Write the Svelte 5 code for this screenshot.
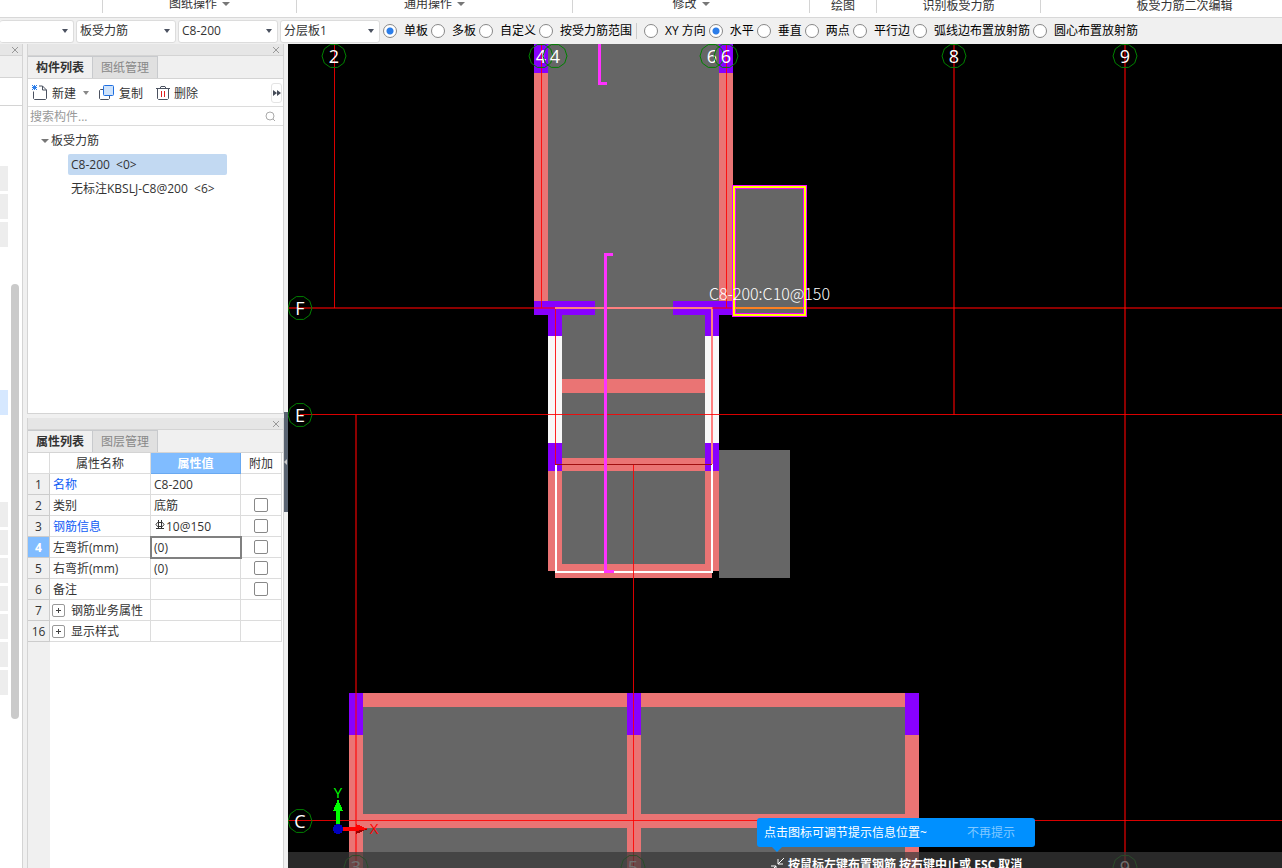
<script>
  const ribbonGroups = [
    { label: '', width: 103 },
    { label: '图纸操作', width: 194, menu: true },
    { label: '通用操作', width: 276, menu: true },
    { label: '修改', width: 237, menu: true },
    { label: '绘图', width: 67 },
    { label: '识别板受力筋', width: 164 },
    { label: '板受力筋二次编辑', width: 288 },
  ];

  const combos = [
    { name: '构件类型', value: '板受力筋' },
    { name: '构件', value: 'C8-200' },
    { name: '分层', value: '分层板1' },
  ];

  const scopes = ['单板', '多板', '自定义', '按受力筋范围'];
  const directions = ['XY 方向', '水平', '垂直', '两点', '平行边', '弧线边布置放射筋', '圆心布置放射筋'];
  let scope = '单板';
  let direction = '水平';

  const navGroups = [
    { gap: 60, count: 3 },
    { gap: 143, count: 1, active: true },
    { gap: 87, count: 7 },
  ];

  let rows = [
    { no: 1, name: '名称', value: 'C8-200', link: true },
    { no: 2, name: '类别', value: '底筋', check: true },
    { no: 3, name: '钢筋信息', value: '10@150', link: true, check: true, rebar: true },
    { no: 4, name: '左弯折(mm)', value: '(0)', check: true, active: true },
    { no: 5, name: '右弯折(mm)', value: '(0)', check: true },
    { no: 6, name: '备注', value: '', check: true },
    { no: 7, name: '钢筋业务属性', value: '', group: true },
    { no: 16, name: '显示样式', value: '', group: true },
  ];

  // plan shapes: x, y, width, height
  const slabs = [
    [534, 44, 199, 264],
    [562, 308, 143, 260],
    [719, 450, 71, 128],
    [733, 187, 72, 128],
    [356, 700, 556, 168],
  ];
  const beams = [
    [534, 73, 14, 228], [719, 73, 14, 228],
    [562, 379, 143, 14], [562, 458, 143, 13],
    [548, 471, 14, 100], [705, 471, 14, 100], [555, 564, 157, 14],
    [363, 693, 542, 14], [363, 814, 542, 14],
    [349, 735, 14, 133], [627, 735, 14, 133], [905, 735, 14, 133],
  ];
  const columns = [
    [534, 44, 14, 29], [719, 44, 14, 29],
    [534, 301, 61, 14], [673, 301, 60, 14],
    [548, 315, 14, 21], [705, 315, 14, 21],
    [548, 443, 14, 28], [705, 443, 14, 28],
    [349, 693, 14, 42], [627, 693, 14, 42], [905, 693, 14, 42],
  ];
  const walls = [[548, 336, 14, 107], [705, 336, 14, 107]];

  // axes: x, y, width, height
  const axes = [
    [334, 44, 1, 264], [541, 44, 1, 264], [726, 44, 1, 264],
    [633, 465, 1, 403], [555, 308, 1, 156],
    [300, 414, 982, 1], [288, 820, 994, 1],
  ];
  const softAxes = [
    [355, 415, 2, 453], [954, 44, 1, 371], [1125, 44, 1, 824],
    [288, 307, 994, 2],
    [953, 44, 1, 371], [1124, 44, 1, 824],
  ];
  const bubbles = [
    [334, 56, '2'], [541, 56, '4'], [555, 56, '4'], [712, 56, '6'], [726, 56, '6'],
    [954, 56, '8'], [1125, 56, '9'],
    [300, 308, 'F'], [300, 415, 'E'], [300, 821, 'C'],
    [356, 867, '3'], [633, 867, '5'], [1125, 867, '9'],
  ];

  const ring = Array.from({ length: 10 }, (_, i) => {
    const a = (i * Math.PI) / 5;
    return `${(Math.cos(a) * 12).toFixed(1)},${(Math.sin(a) * 12).toFixed(1)}`;
  }).join(' ');
</script>

<div class="app">
  <header class="ribbon">
    {#each ribbonGroups as group}
      <div class="ribbon-group" style="width: {group.width}px">
        <span class:raised={group.menu}>{group.label}</span>
        {#if group.menu}<i class="caret wide"></i>{/if}
      </div>
    {/each}
  </header>

  <div class="options">
    <div class="combo first">
      <select aria-label="楼层"><option></option></select>
      <i class="caret"></i>
    </div>
    {#each combos as combo}
      <div class="combo">
        <select aria-label={combo.name}><option>{combo.value}</option></select>
        <i class="caret"></i>
      </div>
    {/each}
    <div class="radios">
      {#each scopes as item}
        <label><input type="radio" name="scope" value={item} bind:group={scope} />{item}</label>
      {/each}
    </div>
    <div class="radios divided">
      {#each directions as item}
        <label><input type="radio" name="direction" value={item} bind:group={direction} />{item}</label>
      {/each}
    </div>
  </div>

  <main>
    <nav class="nav">
      <div class="titlebar">
        <button class="close" aria-label="关闭"><svg viewBox="0 0 8 8"><path d="M1 1l6 6M7 1L1 7" /></svg></button>
      </div>
      <div class="nav-tabs"></div>
      <div class="nav-head"></div>
      <div class="nav-body">
        <div class="nav-list">
          {#each navGroups as group}
            <div class="nav-group" style="margin-top: {group.gap}px">
              {#each Array(group.count) as _}
                <div class="nav-item" class:active={group.active}></div>
              {/each}
            </div>
          {/each}
        </div>
        <div class="scrollbar"></div>
      </div>
    </nav>

    <aside class="dock">
      <section class="panel list-panel">
        <div class="titlebar">
          <button class="close" aria-label="关闭"><svg viewBox="0 0 8 8"><path d="M1 1l6 6M7 1L1 7" /></svg></button>
        </div>
        <div class="tabs">
          <button class="tab active">构件列表</button>
          <button class="tab">图纸管理</button>
        </div>
        <div class="toolbar">
          <button class="tool">
            <svg width="16" height="16" viewBox="0 0 16 16">
              <path d="M1.500 6.500v7l1 1h11l1-1V5l-4-4H7M10.500 1v4h4" fill="none" stroke="#4b5260" />
              <path d="M0 0l5 5M5 0L0 5M2.500 0v5M0 2.500h5" stroke="#2b7de9" />
            </svg>
            <span>新建</span>
          </button>
          <i class="caret menu-caret"></i>
          <button class="tool">
            <svg width="16" height="16" viewBox="0 0 16 16">
              <path d="M4.500 4.500h-3l-1 1v8l1 1h8l1-1V11" fill="none" stroke="#4b5260" />
              <rect x="4.500" y="0.500" width="10" height="10" rx="1" fill="#cfe3fb" stroke="#1f6fe0" />
            </svg>
            <span>复制</span>
          </button>
          <button class="tool delete">
            <svg width="14" height="16" viewBox="0 0 14 16">
              <path d="M0 3.500h14M4 3.500l1-2h4l1 2M1.500 3.500v10l1 1h9l1-1v-10" fill="none" stroke="#4b5260" />
              <path d="M5.500 6v6M8.500 6v6" stroke="#e02020" />
            </svg>
            <span>删除</span>
          </button>
          <button class="more" aria-label="更多"><svg width="8" height="6" viewBox="0 0 8 6"><path d="M0 0l4 3-4 3zM4 0l4 3-4 3z" fill="#444b57" /></svg></button>
        </div>
        <div class="search">
          <input type="text" placeholder="搜索构件..." aria-label="搜索构件" />
          <svg width="11" height="11" viewBox="0 0 11 11"><circle cx="5" cy="5" r="4" /><path d="M8 8l2 2" /></svg>
        </div>
        <div class="tree">
          <div class="tree-root"><i class="caret wide"></i>板受力筋</div>
          <div class="tree-item selected">C8-200&nbsp; &lt;0&gt;</div>
          <div class="tree-item">无标注KBSLJ-C8@200&nbsp; &lt;6&gt;</div>
        </div>
      </section>

      <section class="panel props-panel">
        <div class="titlebar">
          <button class="close" aria-label="关闭"><svg viewBox="0 0 8 8"><path d="M1 1l6 6M7 1L1 7" /></svg></button>
        </div>
        <div class="tabs">
          <button class="tab active">属性列表</button>
          <button class="tab">图层管理</button>
        </div>
        <table>
          <thead>
            <tr><th class="no"></th><th class="name">属性名称</th><th class="value">属性值</th><th class="extra">附加</th></tr>
          </thead>
          <tbody>
            {#each rows as row}
              <tr class:active={row.active}>
                <th class="no" scope="row">{row.no}</th>
                <td class:link={row.link}>
                  {#if row.group}<button class="expand" aria-label="展开{row.name}"></button>{/if}{row.name}
                </td>
                <td class="cell">
                  {#if row.rebar}
                    <svg class="rebar" width="10" height="10" viewBox="0 0 10 10"><path d="M2.500 2.500h5l1.500 2-1.500 2h-5L1 4.500zM3.500 0v9M6.500 0v9M1 8.500h8" /></svg>
                  {/if}{row.value}
                </td>
                <td class="extra">
                  {#if row.check}<input type="checkbox" aria-label="附加{row.name}" />{/if}
                </td>
              </tr>
            {/each}
          </tbody>
        </table>
        <div class="gutter"></div>
      </section>
    </aside>

    <div class="splitter">
      <button class="handle" aria-label="收起"><i></i></button>
    </div>

    <div class="canvas">
      <svg class="plan">
        <g transform="translate(-288 -44)">
          {#each slabs as [x, y, width, height]}<rect class="slab" {x} {y} {width} {height} />{/each}
          {#each beams as [x, y, width, height]}<rect class="beam" {x} {y} {width} {height} />{/each}
          {#each walls as [x, y, width, height]}<rect class="wall" {x} {y} {width} {height} />{/each}
          {#each columns as [x, y, width, height]}<rect class="column" {x} {y} {width} {height} />{/each}

          <path class="outline" d="M556 464v108h156V464" />
          <path class="edge" d="M556 308h156v156" />
          {#each axes as [x, y, width, height]}<rect class="axis" {x} {y} {width} {height} />{/each}
          {#each softAxes as [x, y, width, height]}<rect class="axis soft" {x} {y} {width} {height} />{/each}
          <path class="edge" d="M555 308h157" />
          <path class="dim" d="M555 464.500h157" />

          <path class="rebar-line" d="M599.500 44v39.500h7M613 254.500h-7.500v317h8" />
          <rect class="pick-halo" x="734" y="187" width="71" height="128" />
          <rect class="pick" x="734" y="187" width="71" height="128" />
          <path class="cross" d="M735 308h69" />
          <text class="note" x="709" y="300">C8-200:C10@150</text>

          {#each bubbles as [x, y, label]}
            <g transform="translate({x} {y})">
              <polygon class="ring" points={ring} />
              <text class="axis-label" y="7">{label}</text>
            </g>
          {/each}

          <path d="M338 828v-20" stroke="#0f0" stroke-width="4" />
          <path d="M338 799l5 12h-10z" fill="#0f0" />
          <path d="M338 829h20" stroke="#f00" stroke-width="4" />
          <path d="M368 829l-12 5v-10z" fill="#f00" />
          <path d="M368 829l-12 5v-3z" fill="#900" />
          <circle cx="338" cy="829" r="5" fill="#0000c0" />
          <text class="ucs" x="338" y="798" fill="#0f0">Y</text>
          <text class="ucs" x="374" y="834" fill="#f00">X</text>
        </g>
      </svg>

      <div class="status">
        <svg width="16" height="16" viewBox="0 0 16 16"><path d="M15 1L9 7M9 2v5h5M1 15l6-6M2 9h5v5" /></svg>
        <span>按鼠标左键布置钢筋 按右键中止或 ESC 取消</span>
      </div>
      <div class="tip">
        <span>点击图标可调节提示信息位置~</span>
        <button>不再提示</button>
      </div>
    </div>
  </main>
</div>

<style>
  :global(body) {
    margin: 0;
  }
  .app {
    display: flex;
    flex-direction: column;
    height: 100vh;
    overflow: hidden;
    background: #f0f0f0;
    color: #333;
    font: 12px/16px 'Open Sans', 'Noto Sans CJK SC', sans-serif;
  }
  .app * {
    box-sizing: border-box;
  }
  button,
  input,
  select {
    margin: 0;
    padding: 0;
    border: 0;
    background: none;
    color: inherit;
    font: inherit;
  }
  .caret {
    flex: none;
    border: 3px solid transparent;
    border-top: 4px solid #4b5260;
    border-bottom: 0;
  }
  .caret.wide {
    border-width: 4px 4px 0;
    border-top-color: #777;
  }

  .ribbon {
    display: flex;
    flex: none;
    height: 18px;
    overflow: hidden;
    background: #fff;
    border-bottom: 1px solid #d8d8d8;
  }
  .ribbon-group {
    display: flex;
    flex: none;
    justify-content: center;
    align-items: flex-start;
    gap: 5px;
    height: 13px;
    border-right: 1px solid #d4d4d4;
    white-space: nowrap;
  }
  .ribbon-group span {
    margin-top: -2px;
  }
  .ribbon-group span.raised {
    margin-top: -4px;
  }
  .ribbon-group .caret {
    margin-top: 2px;
  }

  .options {
    display: flex;
    flex: none;
    align-items: center;
    height: 26px;
    gap: 2px;
    white-space: nowrap;
  }
  .combo {
    display: flex;
    align-items: center;
    flex: none;
    width: 100px;
    height: 23px;
    padding-right: 5px;
    background: #fff;
    border: 1px solid #dcdcdc;
    border-radius: 3px;
  }
  .combo.first {
    width: 74px;
    border-left: 0;
  }
  .combo select {
    flex: 1;
    min-width: 0;
    padding-left: 3px;
    appearance: none;
    outline: none;
  }
  .radios {
    display: flex;
    gap: 3px;
    padding-left: 1px;
    color: #000;
  }
  .radios.divided {
    margin-left: 2px;
    padding-left: 7px;
    border-left: 1px solid #ccc;
  }
  .radios label {
    display: flex;
    align-items: center;
    gap: 7px;
  }
  input[type='radio'] {
    width: 14px;
    height: 14px;
    appearance: none;
    background: #fff;
    border: 1px solid #888;
    border-radius: 50%;
  }
  input[type='radio']:checked {
    background: radial-gradient(circle, #2b7de9 3px, #fff 4px);
  }

  main {
    display: flex;
    flex: 1;
    min-height: 0;
  }
  .titlebar {
    display: flex;
    flex: none;
    justify-content: flex-end;
    align-items: center;
    height: 12px;
    padding-right: 3px;
    background: #e6e6e6;
    border-bottom: 1px solid #d4d4d4;
  }
  .close {
    display: flex;
    width: 8px;
    height: 8px;
  }
  .close path {
    stroke: #999;
  }

  .nav {
    display: flex;
    flex-direction: column;
    flex: none;
    width: 23px;
    margin-right: 4px;
    background: #fff;
    border-right: 1px solid #d4d4d4;
  }
  .nav-tabs {
    height: 22px;
    background: #f0f0f0;
    border-bottom: 1px solid #d4d4d4;
  }
  .nav-head {
    height: 28px;
    border-bottom: 1px solid #d4d4d4;
  }
  .nav-body {
    display: flex;
    flex: 1;
    gap: 3px;
  }
  .nav-list {
    width: 8px;
  }
  .nav-group {
    display: flex;
    flex-direction: column;
    gap: 3px;
  }
  .nav-item {
    height: 25px;
    background: #ededed;
  }
  .nav-item.active {
    background: #d6e8ff;
  }
  .scrollbar {
    width: 8px;
    height: 435px;
    margin-top: 178px;
    background: #cacaca;
    border-radius: 4px;
  }

  .dock {
    display: flex;
    flex-direction: column;
    flex: none;
    gap: 4px;
    width: 257px;
  }
  .panel {
    display: flex;
    flex-direction: column;
    background: #fff;
    border: 1px solid #d4d4d4;
    border-top: 0;
  }
  .list-panel {
    height: 370px;
  }
  .props-panel {
    flex: 1;
    border-bottom: 0;
  }
  .tabs {
    display: flex;
    flex: none;
    height: 23px;
    background: #f0f0f0;
    border-bottom: 1px solid #d4d4d4;
  }
  .tab {
    width: 65px;
    padding-top: 1px;
    background: #e0e0e0;
    border: 1px solid #c8cacd;
    border-left: 0;
    border-bottom: 0;
    color: #888;
  }
  .tab.active {
    background: #f0f0f0;
    color: #333;
    font-weight: bold;
  }
  .toolbar {
    display: flex;
    flex: none;
    align-items: center;
    height: 28px;
    padding-left: 4px;
    border-bottom: 1px solid #dcdcdc;
  }
  .tool {
    display: flex;
    align-items: center;
    gap: 4px;
  }
  .tool span {
    padding-top: 2px;
  }
  .menu-caret {
    margin: 0 10px 0 7px;
    border-top-color: #888;
  }
  .delete {
    margin-left: 13px;
  }
  .more {
    display: flex;
    align-items: center;
    justify-content: center;
    width: 11px;
    height: 20px;
    margin: 0 1px 0 auto;
    border: 1px solid #e4e4e4;
    border-radius: 3px;
  }
  .search {
    display: flex;
    flex: none;
    align-items: center;
    height: 19px;
    padding: 0 7px 0 2px;
    border-bottom: 1px solid #dcdcdc;
  }
  .search input {
    flex: 1;
    min-width: 0;
    padding-top: 2px;
    outline: none;
  }
  .search input::placeholder {
    color: #999;
  }
  .search svg {
    fill: none;
    stroke: #aaa;
  }
  .tree {
    display: flex;
    flex-direction: column;
    align-items: flex-start;
    gap: 3px;
    padding-top: 4px;
    line-height: 21px;
  }
  .tree-root {
    display: flex;
    align-items: center;
    gap: 2px;
    padding-left: 13px;
  }
  .tree-item {
    width: 159px;
    margin-left: 40px;
    padding-left: 3px;
    border-radius: 2px;
    white-space: nowrap;
  }
  .tree-item.selected {
    background: #c2d9f2;
  }

  table {
    width: 254px;
    border-collapse: separate;
    border-spacing: 0;
    table-layout: fixed;
  }
  th,
  td {
    height: 21px;
    padding: 2px 3px 0;
    border-right: 1px solid #dcdcdc;
    border-bottom: 1px solid #dcdcdc;
    font-weight: normal;
    line-height: 16px;
    white-space: nowrap;
    text-align: left;
  }
  thead th {
    text-align: center;
  }
  th.no {
    width: 22px;
    padding: 2px 0 0;
    text-align: center;
  }
  tbody th.no {
    background: #f0f0f0;
    border-color: #ccc;
  }
  th.name {
    width: 101px;
  }
  th.value {
    width: 90px;
    background: #80bcff;
    border-color: #6aa9f0;
    color: #fff;
    font-weight: bold;
  }
  th.extra {
    padding: 2px 0 0;
    text-align: center;
  }
  td.extra {
    padding: 0;
  }
  .active th.no {
    background: #80bcff;
    color: #fff;
    font-weight: bold;
  }
  .active .cell {
    outline: 2px solid #808080;
    outline-offset: -1px;
  }
  .link {
    color: #0f5cf5;
  }
  .rebar {
    margin: 0 1px;
    vertical-align: 1px;
    fill: none;
    stroke: #333;
  }
  input[type='checkbox'] {
    display: block;
    width: 14px;
    height: 14px;
    margin: 0 auto;
    appearance: none;
    background: #fff;
    border: 1px solid #888;
    border-radius: 2px;
  }
  .expand {
    width: 13px;
    height: 13px;
    margin: 0 6px 0 -1px;
    border: 1px solid #999;
    border-radius: 2px;
    background:
      linear-gradient(#444, #444) center / 5px 1px no-repeat,
      linear-gradient(#444, #444) center / 1px 5px no-repeat;
    vertical-align: -1px;
  }
  .gutter {
    flex: 1;
    width: 22px;
    background: #f0f0f0;
  }

  .splitter {
    flex: none;
    width: 4px;
    padding-top: 368px;
  }
  .handle {
    display: flex;
    align-items: center;
    width: 4px;
    height: 100px;
    background: #5a6472;
  }
  .handle i {
    border: 3px solid transparent;
    border-left: 0;
    border-right-color: #ccc;
  }

  .canvas {
    position: relative;
    flex: 1;
    min-width: 0;
    overflow: hidden;
    background: #000;
  }
  .plan {
    display: block;
    width: 100%;
    height: 100%;
    shape-rendering: crispEdges;
  }
  .slab {
    fill: #666;
  }
  .beam {
    fill: #ea7474;
  }
  .wall {
    fill: #f8f8f8;
  }
  .column {
    fill: #80f;
  }
  .axis {
    fill: #f00;
    fill-opacity: 0.85;
  }
  .axis.soft {
    fill-opacity: 0.55;
  }
  .outline {
    fill: none;
    stroke: #fff;
    stroke-width: 2;
  }
  .edge {
    fill: none;
    stroke: #ff8080;
    stroke-width: 2;
  }
  .dim {
    stroke: #a01010;
  }
  .rebar-line {
    fill: none;
    stroke: #ff32ff;
    stroke-width: 3;
  }
  .pick-halo {
    fill: none;
    stroke: #f0f;
    stroke-width: 4;
  }
  .pick {
    fill: none;
    stroke: #ff0;
    stroke-width: 2;
  }
  .cross {
    stroke: #ff8020;
    stroke-width: 2;
  }
  .ring {
    fill: none;
    stroke: #008000;
    shape-rendering: auto;
  }
  .axis-label {
    fill: #fff;
    font-size: 18px;
    text-anchor: middle;
  }
  .note {
    fill: #fff;
    font: 300 16px 'Noto Sans CJK SC', sans-serif;
  }
  .ucs {
    font-size: 15px;
    text-anchor: middle;
  }
  .status {
    position: absolute;
    left: 0;
    right: 0;
    bottom: 0;
    display: flex;
    gap: 3px;
    height: 16px;
    padding: 5px 0 0 481px;
    overflow: hidden;
    background: rgba(57, 57, 57, 0.72);
    color: #fff;
    font-weight: bold;
    white-space: nowrap;
  }
  .status svg {
    flex: none;
    fill: none;
    stroke: #fff;
  }
  .tip {
    position: absolute;
    left: 469px;
    bottom: 21px;
    display: flex;
    justify-content: space-between;
    align-items: center;
    width: 278px;
    height: 29px;
    padding: 0 20px 0 7px;
    background: #0090ff;
    border-radius: 3px;
    color: #fff;
    white-space: nowrap;
  }
  .tip::after {
    content: '';
    position: absolute;
    left: 15px;
    top: 100%;
    border: 5px solid transparent;
    border-top-color: #0090ff;
    border-bottom: 0;
  }
  .tip button {
    color: #80c8ff;
  }
</style>
